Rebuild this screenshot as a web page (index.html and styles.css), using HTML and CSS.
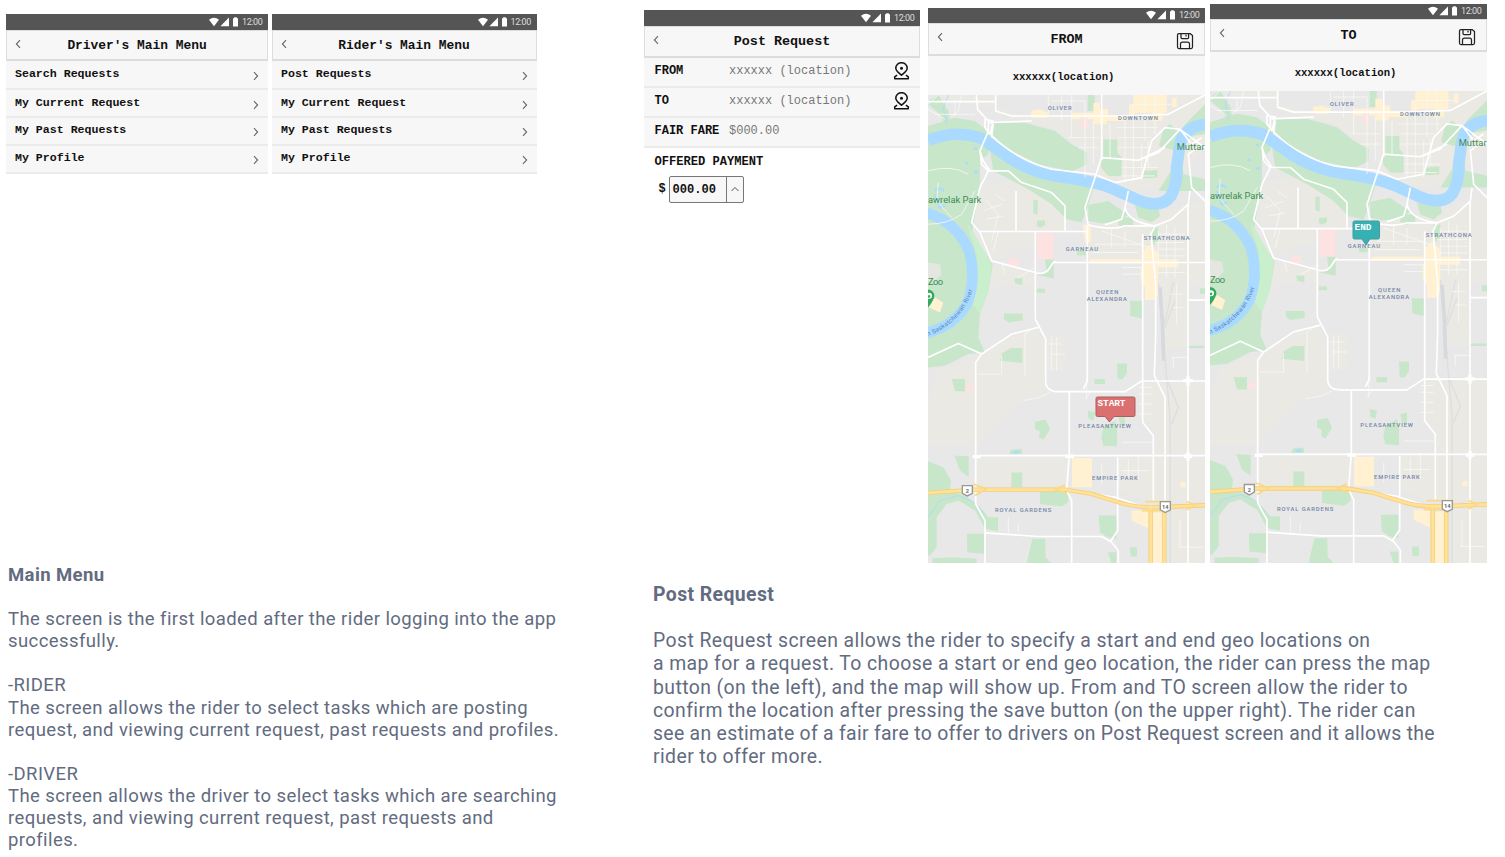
FILE: index.html
```html
<!DOCTYPE html>
<html lang="en">
<head>
<meta charset="utf-8">
<title>Ride App Mockups</title>
<link rel="stylesheet" href="styles.css">
</head>
<body>
<svg class="defs" aria-hidden="true">
  <symbol id="status" viewBox="0 0 30 10">
    <path d="M0 2.700Q5 -1.400 10 2.700L5 9.200z"/><path d="M20 .6V9.200H11.400z"/><path d="M24 1.200h1.200V.2h2.600v1h1.200v8.200h-5z"/>
  </symbol>
  <symbol id="chev" viewBox="0 0 6 10"><path d="M1 1.200 4.600 5 1 8.800" fill="none" stroke="#666" stroke-width="1.100"/></symbol>
  <symbol id="pin" viewBox="0 0 16 18">
    <g fill="none" stroke="#111" stroke-width="1.500" stroke-linejoin="round"><path d="M8 13.300C5.500 11 2.300 9 2.300 6.200a5.700 5.500 0 0 1 11.400 0C13.700 9 10.500 11 8 13.300z"/><path d="M3.600 13.200 1.200 14.800V16.700H14.800V14.800L12.400 13.200"/></g><circle cx="8" cy="6.300" r="1.500" fill="#111"/>
  </symbol>
  <symbol id="save" viewBox="0 0 18 18">
    <g fill="none" stroke="#222" stroke-width="1.250" stroke-linejoin="round"><path d="M3 1.500H14L16.500 3.500V15Q16.500 16.500 15 16.500H3Q1.500 16.500 1.500 15V3Q1.500 1.500 3 1.500z"/><path d="M5 1.700V5.500Q5 6.500 6 6.500H11.600Q12.600 6.500 12.600 5.500V1.700M10 2.800V4.500M4.500 16.300V12Q4.500 10 6.300 10H11.700Q13.500 10 13.500 12V16.300"/></g>
  </symbol>
  <symbol id="map" viewBox="9 282 831 1407" preserveAspectRatio="none">
    <rect x="9" y="282" width="831" height="1407" fill="#e8e8e8"/>
    <g fill="#ebe9e4">
      <path d="M9 282H210V340L380 380L470 440L520 470V550L620 570 740 560 840 440V360L700 420H840V282H640L600 350H330L210 320z"/>
      <path d="M215 545 280 540 360 570 420 620V690H270L165 680 150 640 170 560zM165 695H330V740H270L240 770 200 770zM205 790 330 820 340 850 220 850 190 900zM490 680 640 650 840 600V850H690V780H490V690zM700 790H785V1040H720L695 900zM155 1065 260 1000 340 990 360 1040V1170L290 1200 155 1335H9V1210L40 1110 150 1070zM155 1370H430V1460H155zM580 1370H840V1500H660L580 1470zM650 1145H840V1360H690V1300L650 1250zM740 1530H840V1689H740zM370 1005H420V1110H370z"/>
    </g>
    <g fill="#c8e6c9">
      <path d="M9 375 90 350 150 360 200 400 190 460 165 480V540L150 640 142 690 175 750 203 790 190 870 165 940 160 1010 180 1055 130 1060 60 1095 9 1100z"/>
      <path d="M205 365H300L390 390 440 430 485 455 484 492 440 512 340 490 240 440 198 395z"/>
      <path d="M195 450 270 490 340 525 440 545 510 550 480 640 470 665 425 655 380 610 310 565 240 528 205 510z"/>
      <path d="M840 310 780 370 765 395 735 370 715 385 702 435 755 450 735 515 700 570H840V535L775 520 770 430 805 405 840 400zM488 282H509V330H488zM535 416H577V455L590 470V525H550L528 500V478H535zM655 510 697 507V530L655 533zM490 612 550 600 585 625 610 640 585 660 530 668 490 660zM630 615 700 620 705 645 680 665 640 650z"/>
      <path d="M582 650H625V675L600 680 580 673zM325 597H338V642L325 637zM337 660 360 658V673L345 681 335 675zM268 832H292V853L270 848zM360 775H386V833L335 822 365 815zM335 864H360V876H335zM237 938H293V959L250 965 237 955zM258 1042H292V1087L225 1080 230 1058zM615 900H651V953L616 945zM576 1088H606V1118L592 1136H578zM825 862H840V880H825zM456 750H482V763H456zM680 680H700V725L685 730zM790 1035H838V1042H790z"/>
      <path d="M80 1135H120V1172H90zM330 1263 362 1257 375 1285 355 1318 342 1310 345 1293 330 1285zM88 1365 131 1367V1430L105 1410zM252 1360 258 1347 290 1345 292 1360zM259 1416H292V1460H259zM345 1472H430V1505L410 1518 345 1510zM9 1382 55 1400 78 1440 75 1470 120 1485 165 1520 190 1550H219V1592L180 1585 150 1530 100 1500 65 1510 35 1550 35 1640 15 1665H9zM126 1600H177V1660L127 1655zM322 1615H361L362 1670 380 1689H305zM22 1673 80 1670 155 1675V1689H22zM521 1545H574V1615L548 1610 525 1595zM574 1689V1655L548 1655 560 1689zM615 1640H636V1668H617zM488 1230 510 1235 505 1260 490 1252zM535 1280 570 1260 576 1280V1338L535 1335 529 1310zM508 1135H540V1150H508zM580 1245 600 1240V1273H585z"/>
      <path d="M40 282 70 330 75 360 60 370 45 340 9 310V300z"/>
    </g>
    <path d="M125 665 165 730 200 790 190 870 165 940 135 900 158 840 155 760z" fill="#caefcd"/>
    <path d="M9 785 45 790 50 820 30 840H9z" fill="#e4e6e0"/>
    <g fill="#fff1d2">
      <path d="M505 305H525V325H550V345H600V360H545V370H505V355H440V335H505zM318 330 345 325 370 335 365 350H320zM612 310H625V282H725V335H712V360H680V335H640L612 345zM740 290H755V318H740zM474 672H497V725H480zM495 775H650V788H495zM655 750 675 730 700 755V775H760V800H700V880L688 898H660V860L647 840V800H655zM30 890 55 905 45 935 12 920zM441 1372H501V1460H441zM620 1530H671V1585L620 1560zM766 1445H782V1460H766zM682 1536H714V1689H682z"/>
    </g>
    <g fill="#fde2e2"><path d="M337 695H386V775H337zM252 773H282V795L265 800 250 790zM122 1152H147V1172H122zM468 348H487V382H468z"/></g>
    <g fill="none" stroke="#aadaff">
      <path d="M9 418Q90 385 170 412L260 475Q330 518 420 530T560 562L640 598Q710 625 738 585 758 545 755 500L765 430Q780 375 845 370" stroke-width="35"/>
      <path d="M0 635Q90 660 130 745 155 820 130 900 95 975 0 998" stroke-width="32"/>
      <path d="M30 570Q40 555 58 570M30 580 45 620 60 615" stroke-width="7"/>
      <path d="M70 282 55 320 65 370M9 1550 45 1500 100 1485 140 1500 180 1540" stroke-width="2.500"/>
      <path d="M148 443h8M148 513h10M122 487h8M265 1355h18" stroke-width="8"/>
    </g>
    <path d="M700 845 712 980 725 1135M745 845 728 930 718 970M750 900 720 980M725 1135 735 1250 735 1689M725 1135 760 1220 740 1270" fill="none" stroke="#dcdee0" stroke-width="4"/>
    <path d="M705 860 712 960 716 1080" stroke="#d6dade" stroke-width="11" fill="none"/>
    <g fill="none" stroke="#f8f8f6" stroke-width="2.500">
      <path d="M370 282V340M410 282V360M440 282V410M480 300V530M505 360V490M430 410H520M460 440H520M555 370V470M600 350V540M625 320V540M650 430V540M670 420V500M575 380H700M580 410H680M580 440H670M590 500H700M590 525H690M660 282V420M690 282V400M620 310H740M380 300H480"/>
      <path d="M9 310 40 282M30 340H150M90 300V345M110 282 100 330 80 345M9 325 60 355"/>
      <path d="M180 595 220 640 200 720M210 580 240 600M175 630 230 610M185 655 235 645M220 690 205 750M230 785 240 820M280 830 330 800M530 690 670 740M560 680V740M600 690V740M510 730H650M500 755H640M700 690V800M725 670V830M750 680V830M700 700H780M690 725H780M700 745H780M700 765H780M700 815H780M590 800H650M590 820H650M755 850V970M735 880H775M745 920H775M380 1010V1110M395 1010V1110M370 1030H410M375 1060H420M740 1070H785M745 1070V1100"/>
      <path d="M9 670Q70 670 110 640L150 570M40 545 35 600 80 650M9 510Q80 490 130 520M300 1125V1000L330 980M230 1065V1120H160M295 1200 345 1190 375 1175M485 1130V1195M500 1170 480 1195M530 1390V1450M610 1375V1440M640 1360V1440M590 1410H670M640 1160H680M640 1180H680M640 1210H680M640 1240H680M590 1325H680M760 1640H835M765 1560V1640M250 1550V1600M280 1570V1595"/>
    </g>
    <g fill="none" stroke="#fff" stroke-width="5" stroke-linejoin="round">
      <path d="M9 302H210M212 282V330L260 345H600L730 340 840 282M154 282 158 325 190 360 190 390 165 450 170 490 190 510 165 560M180 355 205 360 195 400 180 380zM190 365 320 360M165 450 175 480 195 510M205 370 200 405Q280 480 380 505L510 520M185 510H250L290 545 380 575 420 615V690M530 282V470L500 560 480 620 490 675M530 470 640 478 700 455 765 385 720 380 680 420 650 530 570 545 510 520M765 385 840 440M765 385 800 430 830 410M830 430 790 460 800 560 840 600M640 478 720 440"/>
      <path d="M160 692H490M165 560 140 665 165 695 200 780 330 815Q360 825 375 800T390 785H840M273 570V690M331 695V955L362 1015V1140Q362 1173 400 1173H600L650 1141H840M487 675V1140L475 1165M490 672Q560 690 600 675L690 675 740 655 790 610 795 570M610 570 600 620 590 655 540 672M600 620Q610 665 690 675L678 700 692 850V1000L688 1125 720 1190V1500M653 700V1265L685 1305V1500M789 610V1689M9 1070 100 1028 170 1060 260 1000 340 980M170 1060 152 1085V1510L180 1560V1689M790 898H840"/>
      <path d="M433 1170V1360L425 1470 440 1500V1689M154 1365H840M180 1597 340 1608H530L560 1625 580 1650V1689M578 1370V1590L555 1625M440 1470 570 1490 660 1520"/>
    </g>
    <path d="M775 1140h28M789 1127v28M776 1367h26M789 1355v25M421 1367h26M143 1368h24" stroke="#fff" stroke-width="10"/>
    <g fill="none" stroke-linejoin="round">
      <path d="M9 1477 150 1467H420L500 1480 590 1508Q640 1522 700 1520L840 1514M677 1515V1689M718 1515V1689" stroke="#f7ce73" stroke-width="13"/>
      <path d="M9 1477 150 1467H420L500 1480 590 1508Q640 1522 700 1520L840 1514M677 1515V1689M718 1515V1689" stroke="#ffe19a" stroke-width="8"/>
      <path d="M145 1450 185 1465 150 1485M420 1453 390 1466 425 1478M660 1503H740M650 1530H735M785 1503 810 1514 785 1528" stroke="#fbd982" stroke-width="5"/>
    </g>
    <g fill="#fff" stroke="#999" stroke-width="4"><path d="M112 1455H142V1478L127 1486 112 1478zM706 1503H736V1528L721 1536 706 1528z"/></g>
    <g class="route"><text x="127" y="1477">2</text><text x="721" y="1526">14</text></g>
    <g class="areas">
      <text x="368" y="326" textLength="72">OLIVER</text><text x="579" y="357" textLength="120">DOWNTOWN</text>
      <text x="422" y="750" textLength="97">GARNEAU</text><text x="656" y="717" textLength="138">STRATHCONA</text>
      <text x="513" y="881" textLength="67">QUEEN</text><text x="485" y="901" textLength="121">ALEXANDRA</text>
      <text x="460" y="1283" textLength="158">PLEASANTVIEW</text><text x="501" y="1438" textLength="137">EMPIRE PARK</text><text x="210" y="1534" textLength="169">ROYAL GARDENS</text>
    </g>
    <g class="places"><text x="755" y="447" textLength="84">Muttar</text><text x="9" y="605" textLength="160">awrelak Park</text><text x="9" y="854" textLength="45">Zoo</text></g>
    <path id="river" d="M8 1006Q65 985 102 942 139 895 144 860" fill="none"/>
    <text class="river"><textPath href="#river" textLength="200">n Saskatchewan River</textPath></text>
    <path d="M-8 885a18 18 0 1 1 34 8Q20 908 9 920L-6 897z" fill="#32aa5b"/><circle cx="12" cy="885" r="9" fill="#fff"/><circle cx="12" cy="887" r="4" fill="#32aa5b"/>
  </symbol>
</svg>

<main class="board">
  <section class="story menu-story">
    <div class="screens">
      <article class="phone driver">
        <div class="status"><svg><use href="#status"/></svg><span>12:00</span></div>
        <header class="bar"><svg class="back"><use href="#chev"/></svg><h2>Driver's Main Menu</h2></header>
        <ul class="menu">
          <li>Search Requests<svg><use href="#chev"/></svg></li>
          <li>My Current Request<svg><use href="#chev"/></svg></li>
          <li>My Past Requests<svg><use href="#chev"/></svg></li>
          <li>My Profile<svg><use href="#chev"/></svg></li>
        </ul>
      </article>
      <article class="phone rider">
        <div class="status"><svg><use href="#status"/></svg><span>12:00</span></div>
        <header class="bar"><svg class="back"><use href="#chev"/></svg><h2>Rider's Main Menu</h2></header>
        <ul class="menu">
          <li>Post Requests<svg><use href="#chev"/></svg></li>
          <li>My Current Request<svg><use href="#chev"/></svg></li>
          <li>My Past Requests<svg><use href="#chev"/></svg></li>
          <li>My Profile<svg><use href="#chev"/></svg></li>
        </ul>
      </article>
    </div>
    <div class="copy">
      <h3>Main Menu</h3>
      <p>The screen is the first loaded after the rider logging into the app<br>successfully.</p>
      <p>-RIDER<br>The screen allows the rider to select tasks which are posting<br>request, and viewing current request, past requests and profiles.</p>
      <p>-DRIVER<br>The screen allows the driver to select tasks which are searching<br>requests, and viewing current request, past requests and<br>profiles.</p>
    </div>
  </section>

  <section class="story post-story">
    <div class="screens">
      <article class="phone post">
        <div class="status"><svg><use href="#status"/></svg><span>12:00</span></div>
        <header class="bar"><svg class="back"><use href="#chev"/></svg><h2>Post Request</h2></header>
        <dl class="fields">
          <div><dt>FROM</dt><dd>xxxxxx (location)</dd><svg><use href="#pin"/></svg></div>
          <div><dt>TO</dt><dd>xxxxxx (location)</dd><svg><use href="#pin"/></svg></div>
          <div><dt>FAIR FARE</dt><dd>$000.00</dd></div>
        </dl>
        <div class="payment">
          <div class="label">OFFERED PAYMENT</div>
          <div class="amount"><span>$</span><div class="stepper"><b>000.00</b><i><svg viewBox="0 0 10 6"><path d="M1.500 5 5 1.500 8.500 5" fill="none" stroke="#555"/></svg></i></div></div>
        </div>
      </article>
      <article class="phone from">
        <div class="status"><svg><use href="#status"/></svg><span>12:00</span></div>
        <header class="bar"><svg class="back"><use href="#chev"/></svg><h2>FROM</h2><svg class="save"><use href="#save"/></svg></header>
        <div class="place">xxxxxx(location)</div>
        <div class="map"><svg class="tiles"><use href="#map"/></svg>
          <svg class="marker start" viewBox="0 0 41 27"><path d="M2.500 1H38.500Q40 1 40 2.500V19Q40 20.500 38.500 20.500H19L14.500 26 10 20.500H2.500Q1 20.500 1 19V2.500Q1 1 2.500 1z" fill="#db7070" stroke="#a85f61"/><text x="2.500" y="9.500" textLength="28">START</text></svg>
        </div>
      </article>
      <article class="phone to">
        <div class="status"><svg><use href="#status"/></svg><span>12:00</span></div>
        <header class="bar"><svg class="back"><use href="#chev"/></svg><h2>TO</h2><svg class="save"><use href="#save"/></svg></header>
        <div class="place">xxxxxx(location)</div>
        <div class="map"><svg class="tiles"><use href="#map"/></svg>
          <svg class="marker end" viewBox="0 0 29 26"><path d="M2.500 1H26Q27.500 1 27.500 2.500V17.500Q27.500 19 26 19H18L14 25 10 19H2.500Q1 19 1 17.500V2.500Q1 1 2.500 1z" fill="#35b1b3" stroke="#4a9a9c"/><text x="2.500" y="9.500" textLength="17">END</text></svg>
        </div>
      </article>
    </div>
    <div class="copy">
      <h3>Post Request</h3>
      <p>Post Request screen allows the rider to specify a start and end geo locations on<br>a map for a request. To choose a start or end geo location, the rider can press the map<br>button (on the left), and the map will show up. From and TO screen allow the rider to<br>confirm the location after pressing the save button (on the upper right). The rider can<br><span class="tight">see an estimate of a fair fare to offer to drivers on Post Request screen and it allows the</span><br>rider to offer more.</p>
    </div>
  </section>
</main>
</body>
</html>
```
FILE: styles.css
```css
* { box-sizing: border-box; }
body, h2, h3, p, ul, dl, dd { margin: 0; padding: 0; }
body { width: 1505px; height: 857px; overflow: hidden; background: #fff; }
svg { display: block; flex: none; }
.defs { position: absolute; width: 0; height: 0; }

.board { display: flex; height: 857px; }
.menu-story { width: 638px; padding-left: 6px; flex: none; }
.post-story { width: 861px; padding-left: 6px; flex: none; }
.screens { display: flex; align-items: flex-start; }
.menu-story .screens { height: 564px; padding-top: 14px; gap: 3.500px; }
.post-story .screens { height: 583px; }

.phone { flex: none; font-family: "Courier New", "Liberation Mono", monospace; color: #111; }
.driver { width: 262px; }
.rider { width: 265px; }
.post { width: 276px; margin: 10px 8px 0 0; }
.from { width: 277px; margin: 7.500px 5px 0 0; }
.to { width: 277px; margin-top: 3.500px; }

.status { height: 15.500px; background: #555; color: #ddd; display: flex; align-items: center; justify-content: flex-end; gap: 3px; padding-right: 5px; font: 9px Roboto, sans-serif; }
.status svg { width: 30px; height: 10px; fill: #fff; }
.status span { width: 21px; white-space: nowrap; letter-spacing: -.4px; }

.bar { height: 31px; background: #f7f7f7; border: 1px solid #ddd; border-bottom: 2px solid #dcdcdc; display: grid; grid-template-columns: 30px 1fr 30px; }
.bar h2 { font-size: 12.900px; line-height: 30px; text-align: center; white-space: nowrap; }
.back { width: 6px; height: 10px; margin: 8px 0 0 8px; transform: scaleX(-1); }

.menu { list-style: none; }
.menu li { height: 28px; display: flex; justify-content: space-between; padding: 5px 9px 0; background: #f7f7f7; border-bottom: 2px solid #ebebeb; font-size: 11.600px; font-weight: bold; line-height: 14px; }
.menu li:first-child { height: 29px; padding-top: 6px; }
.menu li:nth-child(2) { padding-top: 6px; }
.menu li svg { width: 6px; height: 10px; margin-top: 4px; }
.rider .menu li { padding-left: 9.500px; }

.post .bar { height: 32px; }
.post h2, .from h2, .to h2 { font-size: 13.400px; }
.fields div { height: 30px; display: grid; grid-template-columns: 74.500px 1fr 17px; padding: 6.500px 10.500px 0; background: #f7f7f7; border-bottom: 2px solid #ebebeb; font-size: 12px; line-height: 14px; }
.fields div:last-child { padding-top: 6px; }
.fields dt { font-weight: bold; white-space: nowrap; }
.fields dd { color: #777; }
.fields svg { width: 17px; height: 18px; margin-top: -2px; }
.payment { padding: 7px 10.500px; font-size: 12.100px; font-weight: bold; line-height: 14px; }
.amount { display: flex; align-items: center; padding: 7px 0 0 4px; }
.amount span { width: 10px; }
.stepper { display: flex; width: 75px; height: 27px; border: 1px solid #777; border-radius: 2px; background: #f7f7f7; line-height: 26px; }
.stepper b { width: 57px; padding-left: 3px; border-right: 1px solid #777; }
.stepper i { flex: 1; display: flex; align-items: center; justify-content: center; }
.stepper svg { width: 10px; height: 6px; }

.from .bar, .to .bar { height: 32.500px; }
.from h2, .to h2 { line-height: 31px; }
.save { width: 18px; height: 18px; margin: 8px 0 0 2px; }
.place { height: 39px; background: #f7f7f7; text-align: center; font-size: 10.600px; font-weight: bold; line-height: 42px; padding-right: 6px; }
.map { position: relative; height: 468.500px; overflow: hidden; }
.to .map { height: 472px; }
.tiles { width: 277px; height: 100%; }
.marker { position: absolute; }
.start { left: 166.500px; top: 301.500px; width: 41px; height: 27px; }
.end { left: 141.500px; top: 129px; width: 29px; height: 26px; }
.marker text { font: bold 9.500px "Courier New", "Liberation Mono", monospace; fill: #fff; }

.areas text { font: 500 17.500px Roboto, sans-serif; fill: #7186a5; }
.places text { font: 400 28px Roboto, sans-serif; fill: #3d8b57; }
.route text { font: bold 17px Roboto, sans-serif; fill: #666; text-anchor: middle; }
.river { font: 19px Roboto, sans-serif; fill: #5488bd; }

.copy { color: #626b80; font-family: Roboto, sans-serif; white-space: nowrap; letter-spacing: .41px; }
.menu-story .copy { padding-left: 2px; font-size: 18.500px; line-height: 22.100px; }
.post-story .copy { padding-left: 9px; font-size: 19.400px; line-height: 23.150px; }
.tight { letter-spacing: .3px; }
.copy h3 { font-size: inherit; font-weight: 700; }
.menu-story p { margin-top: 22.100px; }
.post-story p { margin-top: 23.150px; }
```
